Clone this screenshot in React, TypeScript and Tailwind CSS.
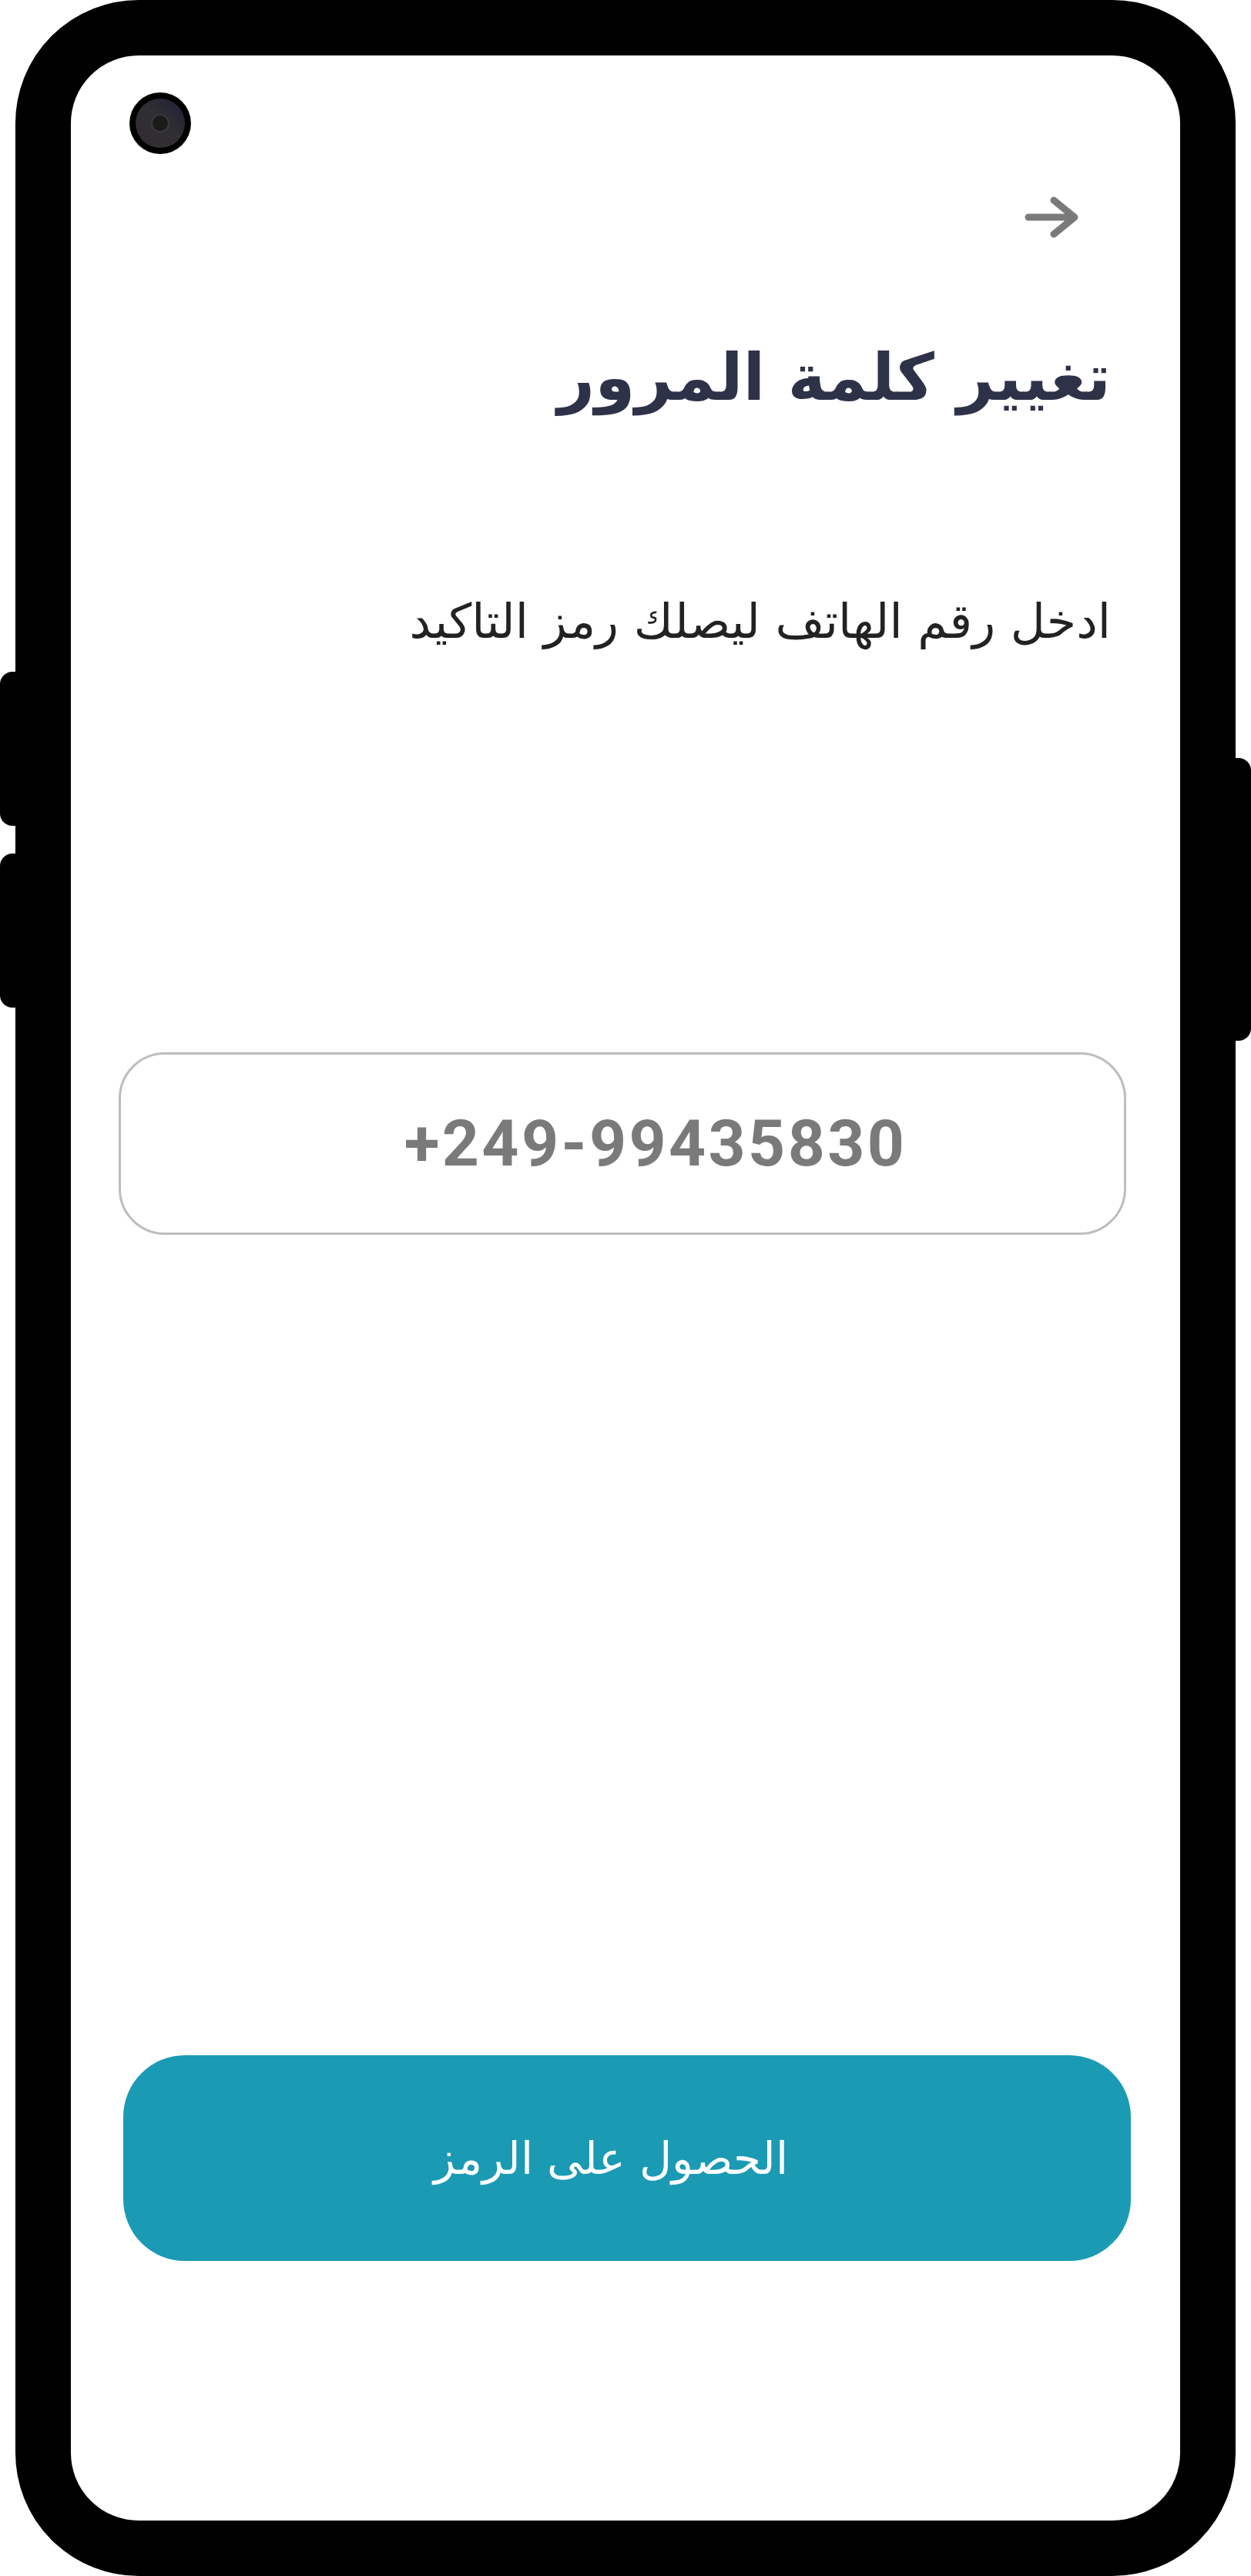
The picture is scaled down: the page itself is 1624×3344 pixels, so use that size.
import React from "react";

function BackArrow() {
  return (
    <svg width="70" height="56" viewBox="0 0 70 56" fill="none">
      <path
        d="M5 28h60M38 6l27 22-27 22"
        stroke="#7a7a7a"
        strokeWidth="9"
        strokeLinecap="round"
        strokeLinejoin="round"
      />
    </svg>
  );
}

function Camera() {
  return (
    <div className="absolute left-[76px] top-[48px] w-[80px] h-[80px] rounded-full bg-black flex items-center justify-center">
      <div className="w-[64px] h-[64px] rounded-full bg-[linear-gradient(225deg,#1e1f3a_0%,#2f2f33_45%,#342a33_100%)] flex items-center justify-center">
        <div className="w-[24px] h-[24px] rounded-full bg-[#1a1a1a] border-[2px] border-[#3a3a3a]" />
      </div>
    </div>
  );
}

export default function App() {
  return (
    <div className="relative w-[1624px] h-[3344px] bg-white overflow-hidden">
      {/* side keys */}
      <div className="absolute left-0 top-[872px] w-[30px] h-[200px] bg-black rounded-l-[16px]" />
      <div className="absolute left-0 top-[1108px] w-[30px] h-[200px] bg-black rounded-l-[16px]" />
      <div className="absolute right-0 top-[984px] w-[30px] h-[367px] bg-black rounded-r-[16px]" />

      <div className="relative ml-[20px] w-[1584px] h-[3344px] border-[72px] border-black rounded-[160px] bg-white">
        <div dir="rtl" className="relative h-full flex flex-col">
          <Camera />

          <div className="flex justify-start pt-[182px] pr-[132px]">
            <BackArrow />
          </div>

          <h1
            className="mt-[138px] pr-[90px] text-[84px] leading-none font-bold text-[#2e3249]"
            style={{ fontFamily: '"DejaVu Sans", sans-serif' }}
          >
            تغيير كلمة المرور
          </h1>

          <p
            className="mt-[244px] pr-[90px] text-[62px] leading-none text-[#222222]"
            style={{ fontFamily: '"DejaVu Sans", sans-serif' }}
          >
            ادخل رقم الهاتف ليصلك رمز التاكيد
          </p>

          <div className="mt-[528px] mr-[70px] w-[1308px] h-[237px] rounded-[60px] border-[3px] border-[#bdbdbd] flex items-center justify-center pl-[86px]">
            <span
              dir="ltr"
              className="text-[84px] font-bold tracking-[0.04em] text-[#7a7a7a] leading-none"
              style={{ fontFamily: 'Roboto, "Liberation Sans", sans-serif' }}
            >
              +249-99435830
            </span>
          </div>

          <button className="mt-[1065px] mr-[64px] w-[1308px] h-[267px] rounded-[80px] bg-[#1b9ab4] flex items-center justify-center pr-[42px]">
            <span
              className="text-[58px] font-light text-white leading-none"
              style={{ fontFamily: '"DejaVu Sans", sans-serif' }}
            >
              الحصول على الرمز
            </span>
          </button>
        </div>
      </div>
    </div>
  );
}
